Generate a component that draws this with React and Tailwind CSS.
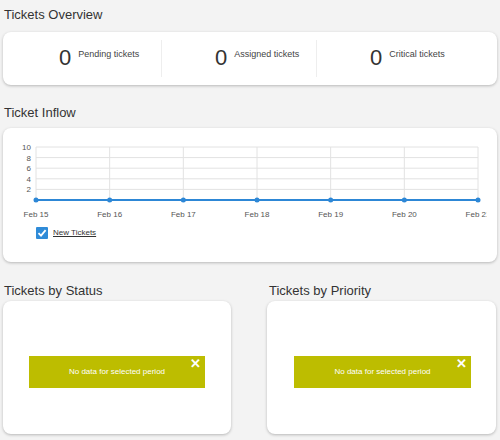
const days = ['Feb 15', 'Feb 16', 'Feb 17', 'Feb 18', 'Feb 19', 'Feb 20', 'Feb 21']

const Stat = ({ label, className }) => (
  <div className={'flex items-start pt-[14px] ' + className}>
    <span className="text-[22px] leading-[24px] font-light text-[#333]">0</span>
    <span className="ml-[7px] mt-[2px] text-[9px] text-[#444]">{label}</span>
  </div>
)

const InflowChart = () => {
  const left = 33
  const right = 475
  const top = 19
  const base = 72
  const step = (right - left) / 6
  const yTicks = [10, 8, 6, 4, 2]
  return (
    <svg width="484" height="98" className="block">
      {yTicks.map((t, i) => {
        const y = top + (i * (base - top)) / 5
        return (
          <g key={t}>
            <line x1={left} x2={right} y1={y} y2={y} stroke="#e2e2e2" strokeWidth="1" />
            <text x={left - 5} y={y + 3} fontSize="8" textAnchor="end" fill="#555">
              {t}
            </text>
          </g>
        )
      })}
      {days.map((d, i) => {
        const x = left + i * step
        return (
          <g key={d}>
            <line x1={x} x2={x} y1={top} y2={base} stroke="#e2e2e2" strokeWidth="1" />
            <text x={x} y={89} fontSize="8" textAnchor="middle" fill="#555">
              {d}
            </text>
          </g>
        )
      })}
      <line x1={left} x2={right} y1={base} y2={base} stroke="#2d87d6" strokeWidth="2" />
      {days.map((d, i) => (
        <circle key={d} cx={left + i * step} cy={base} r="2.5" fill="#2d87d6" />
      ))}
    </svg>
  )
}

const NoData = ({ className }) => (
  <div
    className={
      'relative flex h-[32px] items-center justify-center bg-[#bdbd00] text-[8px] text-white ' +
      className
    }
  >
    No data for selected period
    <span className="absolute right-[4px] top-[1px] text-[13px] font-bold leading-[14px]">✕</span>
  </div>
)

export default function App() {
  return (
    <div
      className="h-[440px] w-[500px] overflow-hidden bg-[#f3f3f3] px-[3px]"
      style={{ fontFamily: '"Liberation Sans", Arial, sans-serif' }}
    >
      <h2 className="pl-[1px] pt-[7px] text-[13px] leading-[16px] text-[#333]">Tickets Overview</h2>
      <div className="mt-[9px] flex h-[53px] w-[494px] rounded-[8px] bg-white shadow-[0_1px_3px_rgba(0,0,0,0.25)]">
        <Stat label="Pending tickets" className="w-[158px] pl-[56px]" />
        <div className="my-[8px] w-px bg-[#eeeeee]" />
        <Stat label="Assigned tickets" className="w-[154px] pl-[53px]" />
        <div className="my-[8px] w-px bg-[#eeeeee]" />
        <Stat label="Critical tickets" className="flex-1 pl-[53px]" />
      </div>

      <h2 className="mt-[20px] pl-[1px] text-[13px] leading-[16px] text-[#333]">Ticket Inflow</h2>
      <div className="mt-[7px] h-[134px] w-[494px] rounded-[8px] bg-white shadow-[0_1px_3px_rgba(0,0,0,0.25)]">
        <InflowChart />
        <div className="mt-[1px] flex items-center pl-[33px]">
          <span className="flex h-[12px] w-[12px] items-center justify-center rounded-[1px] bg-[#2f8bd8]">
            <svg width="10" height="10" viewBox="0 0 10 10">
              <path d="M1.5 5.2 L4 7.6 L8.6 2.2" fill="none" stroke="white" strokeWidth="1.8" />
            </svg>
          </span>
          <span className="ml-[5px] text-[8px] text-[#333] underline">New Tickets</span>
        </div>
      </div>

      <div className="mt-[21px] flex">
        <div className="w-[228px]">
          <h2 className="pl-[1px] text-[13px] leading-[16px] text-[#333]">Tickets by Status</h2>
          <div className="mt-[2px] h-[133px] rounded-[8px] bg-white pt-[55px] shadow-[0_1px_3px_rgba(0,0,0,0.25)]">
            <NoData className="mx-[26px]" />
          </div>
        </div>
        <div className="ml-[36px] w-[229px]">
          <h2 className="pl-[2px] text-[13px] leading-[16px] text-[#333]">Tickets by Priority</h2>
          <div className="mt-[2px] h-[133px] rounded-[8px] bg-white pt-[55px] shadow-[0_1px_3px_rgba(0,0,0,0.25)]">
            <NoData className="ml-[27px] mr-[25px]" />
          </div>
        </div>
      </div>
    </div>
  )
}
